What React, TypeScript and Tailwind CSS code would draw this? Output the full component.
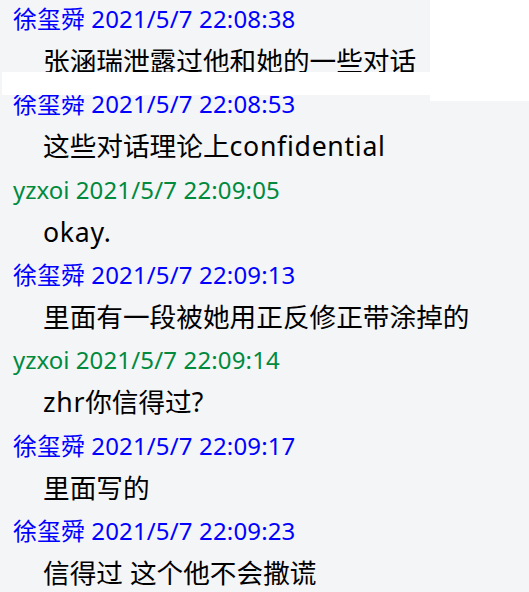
import React from "react";

type Msg = { user: string; time: string; text: string };

const msgs: Msg[] = [
  { user: "徐玺舜", time: "2021/5/7 22:08:38", text: "张涵瑞泄露过他和她的一些对话" },
  { user: "徐玺舜", time: "2021/5/7 22:08:53", text: "这些对话理论上confidential" },
  { user: "yzxoi", time: "2021/5/7 22:09:05", text: "okay." },
  { user: "徐玺舜", time: "2021/5/7 22:09:13", text: "里面有一段被她用正反修正带涂掉的" },
  { user: "yzxoi", time: "2021/5/7 22:09:14", text: "zhr你信得过?" },
  { user: "徐玺舜", time: "2021/5/7 22:09:17", text: "里面写的" },
  { user: "徐玺舜", time: "2021/5/7 22:09:23", text: "信得过 这个他不会撒谎" },
];

function Runs({ text }: { text: string }) {
  const parts = text.split(/([A-Za-z.?]+)/).filter((p) => p.length > 0);
  return (
    <>
      {parts.map((p, i) =>
        /^[A-Za-z.?]+$/.test(p) ? (
          <span key={i} className="tracking-[0.7px]">
            {p}
          </span>
        ) : (
          <span key={i}>{p}</span>
        )
      )}
    </>
  );
}

export default function App() {
  return (
    <div
      className="relative w-[529px] h-[592px] overflow-hidden bg-[#f4f5f7]"
      style={{ fontFamily: '"Noto Sans", "Noto Sans CJK SC", sans-serif' }}
    >
      <div className="flex flex-col">
        {msgs.map((m, i) => (
          <div key={i} className="flex flex-col">
            <div
              className={
                "pl-[13px] h-[38px] leading-[38px] text-[24px] whitespace-nowrap " +
                (m.user === "yzxoi" ? "text-[#008a3e]" : "text-[#0000ff]")
              }
            >
              {m.user} <span className="tracking-[0.15px]">{m.time}</span>
            </div>
            <div className="pl-[43px] h-[47.33px] leading-[46px] text-[26.67px] text-black whitespace-nowrap">
              <Runs text={m.text} />
            </div>
          </div>
        ))}
      </div>
      <div className="absolute left-[430px] top-0 w-[99px] h-[101px] bg-white" />
      <div className="absolute left-[2px] top-[72px] w-[428px] h-[23px] bg-white" />
    </div>
  );
}
